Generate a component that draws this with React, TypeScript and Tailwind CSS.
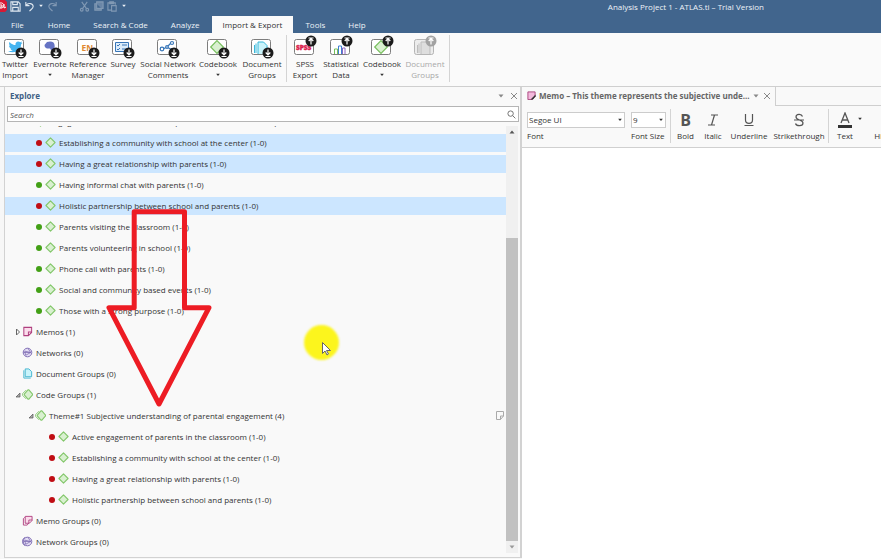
import React from 'react';

type Kind = 'code' | 'memo' | 'network' | 'docs' | 'codes' | 'memos' | 'networks';

function TreeIcon({ kind }: { kind: Kind }) {
  return (
    <svg viewBox="0 0 12 12" className="h-[11px] w-[11px] shrink-0" fill="none" aria-hidden="true">
      {kind === 'code' && <path d="M6 1 11 6 6 11 1 6Z" fill="#d9f0d0" stroke="#83c76b" strokeWidth="1.2" strokeLinejoin="round" />}
      {kind === 'codes' && (
        <>
          <path d="M4.5 1.2 .7 5v2l3.800 3.800" stroke="#83c76b" />
          <path d="M6.500 1h1L11.500 5.500v1L7.500 11h-1L2.500 6.500v-1Z" fill="#d9f0d0" stroke="#83c76b" strokeWidth="1.200" strokeLinejoin="round" />
        </>
      )}
      {kind === 'memo' && (
        <path d="M2 1.500h8.500V7L7 10.500H2ZM10.500 6.500H7v4" fill="#fbdcec" stroke="#b0407f" strokeWidth="1.100" />
      )}
      {kind === 'memos' && (
        <>
          <path d="M3.500 1.500h7.500V6L8 9H3.500ZM11 5.500H7.500V9" fill="#fbdcec" stroke="#b0407f" />
          <path d="M3 2.500 1.500 4v7h4L7.500 9" stroke="#b0407f" />
        </>
      )}
      {kind === 'docs' && (
        <>
          <path d="M3.500 1h4L10.500 4v5.500h-7Z" fill="#c9f3fa" stroke="#3fb5cf" />
          <path d="M2 2.500V11h7.500" stroke="#3fb5cf" />
        </>
      )}
      {(kind === 'network' || kind === 'networks') && (
        <>
          <circle cx="6" cy="6" r="4.700" fill="#e3dcf4" stroke="#7a68b0" />
          <path d="M3 4.500 9.500 6 4 9M3 4.500 4 9M6.500 1.500 9.500 6M1.500 6h8" stroke="#7a68b0" strokeWidth="0.800" />
          {kind === 'networks' && <path d="M3.500 1.500C-.5 3-.5 9 3.500 10.500" stroke="#7a68b0" />}
        </>
      )}
    </svg>
  );
}

type Art = 'twitter' | 'evernote' | 'en' | 'survey' | 'social' | 'code' | 'docs' | 'spss' | 'stats' | 'graydocs';

function RibbonIcon({ art, up = false }: { art: Art; up?: boolean }) {
  const gray = art === 'graydocs';
  const by = up ? 6 : 18;
  return (
    <svg viewBox="0 0 26 24" className="h-6 w-[26px]" fill="none" aria-hidden="true">
      <rect x="2.500" y="4.500" width="19" height="15" rx="2" fill={gray ? '#ececec' : '#fff'} stroke={gray ? '#b5b5b5' : '#7d7d7d'} />
      {art === 'twitter' && (
        <path d="M6 16c3 .4 5-.6 5-.6-1.700 0-2.500-1.300-2.700-2h1.100C7.600 12.900 7 11.500 7 10.500l1.100.3C6.800 9.500 6.900 8 7.500 7c2 2.200 4 3 6 3.100C13 6.500 16.500 5.500 18.300 7.300l1.900-.7-1.200 1.700 1.500-.3-1.500 1.500C19 16 12 19 6 16Z" fill="#45b4f0" />
      )}
      {art === 'evernote' && (
        <path d="M7.500 10 10 7c3-1 5-.5 6.500.5 1.500 1.500 1.500 5 .5 7.500h-3l-1-1.500c-3 .5-5.500-.5-5.500-3.500Z" fill="#6674c4" />
      )}
      {art === 'en' && <text x="6.500" y="15.500" fontSize="8.500" fontWeight="700" fill="#e08a32" fontFamily="Open Sans, sans-serif">EN</text>}
      {art === 'survey' && (
        <g stroke="#3876b8">
          <path d="M5.500 7.500h13v9h-13Z" fill="#dcecfa" />
          <path d="m7 10 1 1 2-2M12 10h5m-10 4 1 1 2-2M12 14h5" />
        </g>
      )}
      {art === 'social' && (
        <g stroke="#3876b8" strokeWidth="1.200">
          <path d="m8 14 4-2 4-4M12 12l5 3" />
          <circle cx="7" cy="14" r="1.800" fill="#fff" />
          <circle cx="12" cy="12" r="1.300" fill="#fff" />
          <circle cx="17" cy="8" r="1.500" fill="#fff" />
          <circle cx="17" cy="15" r="1.500" fill="#fff" />
        </g>
      )}
      {art === 'code' && <path d="M12 5.700 18.300 12 12 18.300 5.700 12Z" fill="#d9f0d0" stroke="#77bf5d" strokeWidth="1.200" />}
      {(art === 'docs' || gray) && (
        <g stroke={gray ? '#bdbdbd' : '#39b8da'}>
          <path d="M9 19V7h5.500L18 10.500V19" fill={gray ? '#dedede' : '#c9f3fa'} />
          <path d="M5.500 18v-8M7 18V8.500" />
        </g>
      )}
      {art === 'spss' && <text x="4" y="15" fontSize="6.500" fontWeight="800" fill="#dc2350" stroke="#dc2350" strokeWidth="0.400" fontFamily="Open Sans, sans-serif">SPSS</text>}
      {art === 'stats' && (
        <>
          <path d="M6.500 19v-5h3v5" stroke="#76bf5b" />
          <path d="M10.500 19v-8h3v8" stroke="#3f7fd0" />
          <path d="M14.500 19v-6h2.500v6" stroke="#8a65c2" />
        </>
      )}
      <circle cx="19" cy={by} r="5.500" fill={gray ? '#a2a2a2' : '#1b1b1b'} />
      {up ? (
        <path d="M19 9.500V4.500M16.700 6 19 3.700 21.300 6M16.500 3h5" stroke="#fff" strokeWidth="1.200" />
      ) : (
        <path d="M19 14.500v5M16.700 17.500 19 19.800l2.300-2.300M16.500 21.500h5" stroke="#fff" strokeWidth="1.200" />
      )}
    </svg>
  );
}

function Caret({ className = '', wide }: { className?: string; wide?: boolean }) {
  return (
    <svg viewBox="0 0 6 4" className={`h-1 w-1.5 shrink-0 ${className}`} aria-hidden="true">
      <path d={wide ? 'M.5.5h5L3 3.5Z' : 'M1.200.8h3.600L3 3Z'} fill="currentColor" />
    </svg>
  );
}

function Tool({ lines, art, up, menu, width, disabled }: { lines: string[]; art: Art; up?: boolean; menu?: boolean; width: string; disabled?: boolean }) {
  return (
    <button type="button" disabled={disabled} className={`flex shrink-0 flex-col items-center ${width} ${disabled ? 'text-[#a8a8a8]' : 'text-[#333]'}`}>
      <RibbonIcon art={art} up={up} />
      <span className="-mt-px block leading-[11px] whitespace-nowrap">
        {lines.map((l) => <span key={l} className="block">{l}</span>)}
      </span>
      {menu && <Caret className="mt-1" />}
    </button>
  );
}

function Quick({ label, dim, children }: { label: string; dim?: boolean; children: React.ReactNode }) {
  return (
    <button type="button" aria-label={label} className={dim ? 'text-[#8199b4]' : 'text-[#dfe8f1]'}>
      <svg viewBox="0 0 12 12" className="h-[11px] w-[11px]" fill="none" stroke="currentColor" strokeWidth="1.200">{children}</svg>
    </button>
  );
}

function CloseIcon() {
  return <svg viewBox="0 0 8 8" className="h-2 w-2" stroke="currentColor" aria-hidden="true"><path d="m1 1 6 6M7 1 1 7" /></svg>;
}

const tabs = ['File', 'Home', 'Search & Code', 'Analyze', 'Import & Export', 'Tools', 'Help'];

interface Node { text: string; kind: Kind; level: number; dot?: 'red' | 'green'; open?: boolean; closed?: boolean; selected?: boolean; note?: boolean }

const nodes: Node[] = [
  { text: 'Establishing a community with school at the center (1-0)', kind: 'code', level: 1, dot: 'red', selected: true },
  { text: 'Having a great relationship with parents (1-0)', kind: 'code', level: 1, dot: 'red', selected: true },
  { text: 'Having informal chat with parents (1-0)', kind: 'code', level: 1, dot: 'green' },
  { text: 'Holistic partnership between school and parents (1-0)', kind: 'code', level: 1, dot: 'red', selected: true },
  { text: 'Parents visiting the classroom (1-0)', kind: 'code', level: 1, dot: 'green' },
  { text: 'Parents volunteering in school (1-0)', kind: 'code', level: 1, dot: 'green' },
  { text: 'Phone call with parents (1-0)', kind: 'code', level: 1, dot: 'green' },
  { text: 'Social and community based events (1-0)', kind: 'code', level: 1, dot: 'green' },
  { text: 'Those with a strong purpose (1-0)', kind: 'code', level: 1, dot: 'green' },
  { text: 'Memos (1)', kind: 'memo', level: 0, closed: true },
  { text: 'Networks (0)', kind: 'network', level: 0 },
  { text: 'Document Groups (0)', kind: 'docs', level: 0 },
  { text: 'Code Groups (1)', kind: 'codes', level: 0, open: true },
  { text: 'Theme#1 Subjective understanding of parental engagement (4)', kind: 'codes', level: 1, open: true, note: true },
  { text: 'Active engagement of parents in the classroom (1-0)', kind: 'code', level: 2, dot: 'red' },
  { text: 'Establishing a community with school at the center (1-0)', kind: 'code', level: 2, dot: 'red' },
  { text: 'Having a great relationship with parents (1-0)', kind: 'code', level: 2, dot: 'red' },
  { text: 'Holistic partnership between school and parents (1-0)', kind: 'code', level: 2, dot: 'red' },
  { text: 'Memo Groups (0)', kind: 'memos', level: 0 },
  { text: 'Network Groups (0)', kind: 'networks', level: 0 },
];

function Row({ node }: { node: Node }) {
  const pad = node.level === 0 ? 'pl-2' : node.level === 1 ? (node.dot ? 'pl-7' : 'pl-[21px]') : 'pl-[41px]';
  return (
    <li className="flex h-[21px] shrink-0 items-center">
      <div className={`flex h-[18px] w-full items-center ${pad} ${node.selected ? 'bg-[#cce6ff]' : ''}`}>
        <span className={`flex shrink-0 items-center justify-center ${node.dot ? 'w-3' : 'w-[9px]'}`}>
          {node.dot && <i className={`h-1.5 w-1.5 rounded-full ${node.dot === 'red' ? 'bg-[#c00d14]' : 'bg-[#43a016]'}`} />}
          {node.open && <svg viewBox="0 0 6 6" className="h-1.5 w-1.5"><path d="M5 1v4H1Z" fill="#aaa" stroke="#555" strokeWidth="0.700" /></svg>}
          {node.closed && <svg viewBox="0 0 6 8" className="h-2 w-1.5"><path d="M1.500 1 4.500 4l-3 3Z" fill="#fff" stroke="#666" /></svg>}
        </span>
        <span className="mr-[3px] flex shrink-0"><TreeIcon kind={node.kind} /></span>
        <span className="whitespace-nowrap text-[#333]">{node.text}</span>
        {node.note && (
          <svg viewBox="0 0 8 9" className="mr-0.5 ml-auto h-[9px] w-2" fill="none" stroke="#aaa"><path d="M.5.500h7V5L4.500 8.500h-4ZM7.500 5h-3v3.500" /></svg>
        )}
      </div>
    </li>
  );
}

function Format({ label, width, children }: { label: string; width: string; children: React.ReactNode }) {
  return (
    <button type="button" className={`flex shrink-0 flex-col items-center ${width}`}>
      <span className="flex h-[21px] items-center justify-center text-[#555]">{children}</span>
      <span className="leading-3 text-[#333]">{label}</span>
    </button>
  );
}

export default function App() {
  return (
    <div className="relative flex h-screen flex-col overflow-hidden bg-[#f7f7f7] font-['Open_Sans',sans-serif] text-[8px] text-[#333]">
      <header className="shrink-0 bg-[#41658d] text-[#eef3f8]">
        <div className="flex h-4 items-start justify-between">
          <div className="flex h-3 items-center gap-[3px]">
            <svg viewBox="0 0 7 12" className="h-3 w-[7px]" aria-hidden="true"><path d="M0 0h5l2 2v8l-2 2H0Z" fill="#d71935" /><path d="M0 3c5-1 5 6 0 5M0 5h2v2H0M4 4v4l2-1" fill="none" stroke="#fff" /></svg>
            <Quick label="Save"><path d="M1 1h8l2 2v8H1ZM3 1v3h5V1M3 11V7h6v4" /></Quick>
            <Quick label="Undo"><path d="M2 1v4h4M2 5c3-4 8-2 8 1 0 2-2 3-4 5" /></Quick>
            <Caret />
            <Quick label="Redo" dim><path d="M10 1v4H6M10 5C7 1 2 3 2 6c0 2 2 3 4 5" /></Quick>
            <span className="ml-[18px] flex items-center gap-[3px]">
              <Quick label="Cut" dim><path d="m3 1 5 7M9 1 4 8" /><circle cx="3" cy="9.500" r="1.500" /><circle cx="9" cy="9.500" r="1.500" /></Quick>
              <Quick label="Copy" dim><path d="M4 1h7v7H4ZM4 3H2v7h7V8" fill="#6a86a7" /></Quick>
              <Quick label="Paste" dim><path d="M5 10H1V2h8v2M3 1h4v2H3ZM5 5h5v6H5Z" /></Quick>
              <Caret />
            </span>
          </div>
          <h1 className="pr-[117px] leading-[13px]">Analysis Project 1 - ATLAS.ti – Trial Version</h1>
        </div>
        <nav className="flex h-[17px] gap-px">
          {tabs.map((t) => (
            <button type="button" key={t} className={`h-full shrink-0 px-[11px] whitespace-nowrap ${t === 'File' ? 'mr-px' : ''} ${t === 'Import & Export' ? 'bg-[#fafafa] text-[#333]' : ''}`}>{t}</button>
          ))}
        </nav>
      </header>

      <section className="flex h-[54px] shrink-0 items-start border-b border-[#cfcfcf] bg-[#fafafa] pt-0.5">
        <Tool lines={['Twitter', 'Import']} art="twitter" width="w-[30px]" />
        <Tool lines={['Evernote']} art="evernote" menu width="w-10" />
        <Tool lines={['Reference', 'Manager']} art="en" width="w-9" />
        <Tool lines={['Survey']} art="survey" width="w-[34px]" />
        <Tool lines={['Social Network', 'Comments']} art="social" width="w-14" />
        <Tool lines={['Codebook']} art="code" menu width="w-11" />
        <Tool lines={['Document', 'Groups']} art="docs" width="w-11" />
        <div className="mr-0.5 ml-0.5 h-[47px] w-px bg-[#d4d4d4]" />
        <Tool lines={['SPSS', 'Export']} art="spss" up width="w-8" />
        <Tool lines={['Statistical', 'Data']} art="stats" up width="w-10" />
        <Tool lines={['Codebook']} art="code" up menu width="w-[42px]" />
        <Tool lines={['Document', 'Groups']} art="graydocs" up disabled width="w-11" />
        <div className="ml-0.5 h-[47px] w-px bg-[#d4d4d4]" />
      </section>

      <main className="flex min-h-0 flex-1">
        <aside className="mb-px ml-1 flex w-[518px] shrink-0 flex-col border-r-2 border-b border-l border-[#d2d2d2] bg-[#f9f9f9]">
          <div className="flex h-[19px] shrink-0 items-center justify-between pr-0.5 pb-0.5 pl-[5px]">
            <h2 className="font-bold text-[#3e5f85]">Explore</h2>
            <div className="flex items-center gap-1.5 text-[#888]">
              <Caret wide />
              <button type="button" aria-label="Close Explore"><CloseIcon /></button>
            </div>
          </div>
          <label className="mr-px ml-0.5 flex h-4 shrink-0 items-center border border-[#b5b5b5] bg-white pr-0.5">
            <input aria-label="Search" placeholder="Search" className="h-full min-w-0 flex-1 pl-0.5 italic outline-none placeholder:text-[#555]" />
            <svg viewBox="0 0 10 10" className="h-[9px] w-[9px]" fill="none" stroke="#666"><circle cx="4" cy="4" r="3" /><path d="m6.300 6.300 3 3" /></svg>
          </label>
          <div className="mt-1 flex min-h-0 flex-1">
            <div className="min-w-0 flex-1 overflow-hidden">
              <div className="flex h-1.5 items-end overflow-hidden">
                <ul className="w-full"><Row node={{ text: 'Engagement in the school for our parents at home or at camp', kind: 'code', level: 1 }} /></ul>
              </div>
              <ul>{nodes.map((n, i) => <Row key={i} node={n} />)}</ul>
            </div>
            <div className="mr-0.5 mb-1 flex w-3 shrink-0 flex-col items-center bg-[#f0f0f0]">
              <div className="flex h-3 items-center text-[#555]"><Caret wide className="rotate-180" /></div>
              <div className="flex-[100]" />
              <div className="w-full flex-[302] bg-[#c1c1c1]" />
              <div className="flex h-3 items-center text-[#999]"><Caret wide /></div>
            </div>
          </div>
        </aside>

        <section className="flex min-w-0 flex-1 flex-col bg-white">
          <div className="flex h-[19px] shrink-0 bg-[#f9f9f9]">
            <div className="flex w-[254px] shrink-0 items-center border-r border-[#cfcfcf] pr-1 pb-0.5 pl-[5px]">
              <svg viewBox="0 0 10 10" className="h-[9px] w-[9px] shrink-0" aria-hidden="true"><path d="M1 1h8v5L6 9.500H1Z" fill="#f3b9dc" stroke="#a8407b" /><path d="M4 9.500 9.500 4v2L6.500 9.500Z" fill="#333" /></svg>
              <h2 className="ml-[3px] font-bold whitespace-nowrap text-[#666]">Memo – This theme represents the subjective unde...</h2>
              <div className="ml-auto flex items-center gap-1 text-[#888]">
                <Caret wide />
                <button type="button" aria-label="Close memo"><CloseIcon /></button>
              </div>
            </div>
            <div className="flex-1 border-b border-[#cfcfcf]" />
          </div>
          <div className="flex h-[42px] shrink-0 items-start overflow-hidden border-b border-[#d0d0d0] bg-[#f9f9f9] pt-[3px] pl-[5px]">
            <label className="mt-[3px] flex w-[98px] shrink-0 flex-col leading-3">
              <span className="flex h-4 items-center border border-[#ccc] bg-white pr-px">
                <select className="h-full min-w-0 flex-1 appearance-none pl-px outline-none"><option>Segoe UI</option></select><Caret />
              </span>
              <span className="mt-0.5">Font</span>
            </label>
            <label className="mt-[3px] ml-1.5 flex w-[35px] shrink-0 flex-col leading-3 whitespace-nowrap">
              <span className="flex h-4 items-center border border-[#ccc] bg-white pr-px">
                <select className="h-full min-w-0 flex-1 appearance-none pl-px outline-none"><option>9</option></select><Caret />
              </span>
              <span className="mt-0.5">Font Size</span>
            </label>
            <div className="ml-1 h-[34px] w-px shrink-0 bg-[#d4d4d4]" />
            <Format label="Bold" width="w-[29px]"><b className="text-base leading-5">B</b></Format>
            <Format label="Italic" width="w-[26px]"><svg viewBox="0 0 12 12" className="h-3 w-3" fill="none" stroke="currentColor" strokeWidth="1.200"><path d="M4 1h7M1 11h7M7.500 1 4.500 11" /></svg></Format>
            <Format label="Underline" width="w-[46px]"><svg viewBox="0 0 12 14" className="h-3.5 w-3" fill="none" stroke="currentColor" strokeWidth="1.200"><path d="M2.500 1v6c0 4.500 7 4.500 7 0V1M1.500 12.500h9" /></svg></Format>
            <Format label="Strikethrough" width="w-[54px]"><svg viewBox="0 0 12 14" className="h-3.5 w-3" fill="none" stroke="currentColor" strokeWidth="1.200"><path d="M9.500 3.500C8.500.5 3 .8 3 4c0 3.500 7 2.500 7 6 0 3.500-6.500 3.500-7.500.5M1 7h10" /></svg></Format>
            <div className="ml-0.5 h-[34px] w-px shrink-0 bg-[#d4d4d4]" />
            <Format label="Text" width="w-8"><svg viewBox="0 0 14 16" className="h-4 w-3.5" fill="none" stroke="currentColor" strokeWidth="1.300"><path d="M3 11 7 1l4 10M4.500 8h5" /><path d="M0 14.500h14" stroke="#333" strokeWidth="3" /></svg></Format>
            <Caret className="mt-2 -ml-1" />
            <Format label="Highlight" width="w-14"> </Format>
          </div>
          <textarea aria-label="Memo text" className="min-h-0 w-full flex-1 resize-none bg-white outline-none" />
        </section>
      </main>

      <svg viewBox="0 0 106 200" className="pointer-events-none absolute top-[208px] left-[106px] h-[200px] w-[106px]" fill="none" stroke="#ed1c24" strokeWidth="5" aria-hidden="true">
        <path d="M28.200 3.700h50.300v96h24.500L53 196 3 99.700h25.200Z" strokeLinejoin="round" />
      </svg>
      <div className="pointer-events-none absolute top-[325px] left-[304px] h-[35px] w-[35px] rounded-full bg-[#fcf51d] blur-[1px]" />
      <svg viewBox="0 0 9 14" className="pointer-events-none absolute top-[342px] left-[322px] h-3.5 w-[9px]" aria-hidden="true"><path d="M.5.500v11L3 9l2 4 1.500-1-2-3.500h4Z" fill="#fff" stroke="#666" /></svg>
    </div>
  );
}
